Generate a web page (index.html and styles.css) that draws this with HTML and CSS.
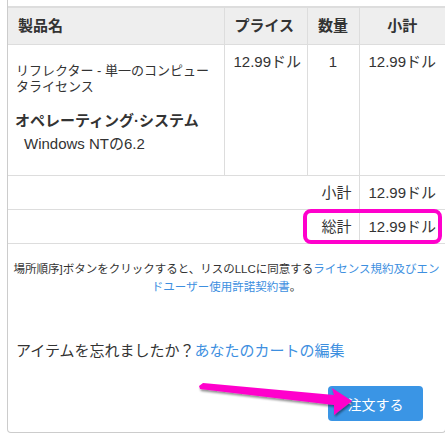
FILE: index.html
```html
<!DOCTYPE html>
<html lang="ja">
<head>
<meta charset="utf-8">
<link rel="stylesheet" href="styles.css">
</head>
<body>
<div class="card">
  <table class="cart">
    <colgroup>
      <col class="c1"><col class="c2"><col class="c3"><col class="c4">
    </colgroup>
    <thead>
      <tr>
        <th>製品名</th>
        <th>プライス</th>
        <th class="center">数量</th>
        <th class="center">小計</th>
      </tr>
    </thead>
    <tbody>
      <tr class="item">
        <td>
          <div class="pname">リフレクター - 単一のコンピュータライセンス</div>
          <div class="opt-title">オペレーティング·システム</div>
          <div class="opt-value">Windows NTの6.2</div>
        </td>
        <td class="money">12.99ドル</td>
        <td class="center">1</td>
        <td class="money">12.99ドル</td>
      </tr>
      <tr class="sum">
        <td colspan="3" class="right">小計</td>
        <td class="money">12.99ドル</td>
      </tr>
      <tr class="sum total">
        <td colspan="3" class="right">総計</td>
        <td class="money">12.99ドル</td>
      </tr>
    </tbody>
  </table>
  <span class="highlight"></span>
  <p class="terms">場所順序]ボタンをクリックすると、リスのLLCに同意する<a href="#">ライセンス規約及びエン</a><br><a href="#">ドユーザー使用許諾契約書</a>。</p>
  <p class="forgot">アイテムを忘れましたか？<a href="#">あなたのカートの編集</a></p>
  <div class="actions">
    <button class="order">注文する</button>
  </div>
  <svg class="arrow" width="200" height="50" viewBox="0 0 200 50">
    <defs>
      <filter id="sh" x="-10%" y="-50%" width="120%" height="200%">
        <feDropShadow dx="1" dy="2" stdDeviation="1.2" flood-color="#000" flood-opacity="0.45"/>
      </filter>
    </defs>
    <polygon filter="url(#sh)" fill="#f0c" points="2,6 6,3 137,15 135,8 155,21 137,35 137,25 3,9"/>
  </svg>
</div>
</body>
</html>
```
FILE: styles.css
```css
html, body {
  margin: 0;
  padding: 0;
  background: #fff;
  overflow: hidden;
}
body {
  font-family: "Liberation Sans", "Noto Sans CJK JP", sans-serif;
  color: #333;
  font-size: 15px;
}
a {
  color: #3d8fdf;
  text-decoration: none;
}
.card {
  position: relative;
  margin-left: 7px;
  width: 437px;
  height: 426px;
  border: 1px solid #ccc;
  border-top: none;
  border-radius: 0 0 4px 4px;
  padding-top: 6px;
  box-sizing: content-box;
}
.cart {
  width: 437px;
  border-collapse: collapse;
  table-layout: fixed;
  border-top: 2px solid #ddd;
}
col.c1 { width: 216px; }
col.c2 { width: 83px; }
col.c3 { width: 52px; }
col.c4 { width: 86px; }
.cart th {
  background: #eee;
  font-weight: bold;
  font-size: 15px;
  text-align: left;
  height: 36px;
  padding: 0 10px;
  border-left: 1px solid #ddd;
  border-bottom: 1px solid #ddd;
  line-height: 20px;
}
.cart th:first-child { border-left: none; padding-left: 10px; }
.cart td {
  border-left: 1px solid #ddd;
  border-top: 1px solid #ddd;
  padding: 0 3px 0 9px;
  line-height: 18px;
  vertical-align: top;
}
.cart td.money { white-space: nowrap; }
.cart td:first-child { border-left: none; padding-left: 8px; padding-right: 7px; }
.cart .center { text-align: center; padding-left: 6px; padding-right: 6px; }
.cart .right { text-align: right; }
.item td { padding-top: 8px; height: 122px; }
.pname {
  margin-top: 10px;
  font-size: 13px;
  line-height: 16px;
}
.opt-title {
  font-weight: bold;
  font-size: 15px;
  margin-top: 17px;
  margin-left: -1px;
}
.opt-value {
  margin-top: 5px;
  margin-left: 8px;
}
.sum td {
  height: 33px;
  vertical-align: middle;
  padding-top: 0;
}
.cart .sum td.right { padding-right: 7px; }
.sum td:first-child { border-left: none; }
.cart tbody tr:last-child td { border-bottom: 1px solid #ddd; }
.highlight {
  position: absolute;
  left: 295px;
  top: 209px;
  width: 131px;
  height: 27px;
  border: 4px solid #f0c;
  border-radius: 8px;
}
.terms {
  margin: 17px 0 0;
  padding: 0 2px;
  font-size: 11.5px;
  line-height: 17.5px;
  text-align: center;
}
.forgot {
  margin: 45px 0 0 8px;
  font-size: 15px;
  line-height: 20px;
}
.actions {
  display: flex;
  justify-content: flex-end;
  margin-top: 25px;
  padding-right: 22px;
}
.order {
  background: #3a95e5;
  color: #fff;
  border: none;
  border-radius: 4px;
  width: 95px;
  height: 35px;
  font-family: inherit;
  font-size: 14px;
}
.arrow {
  position: absolute;
  left: 189px;
  top: 380px;
}
```
